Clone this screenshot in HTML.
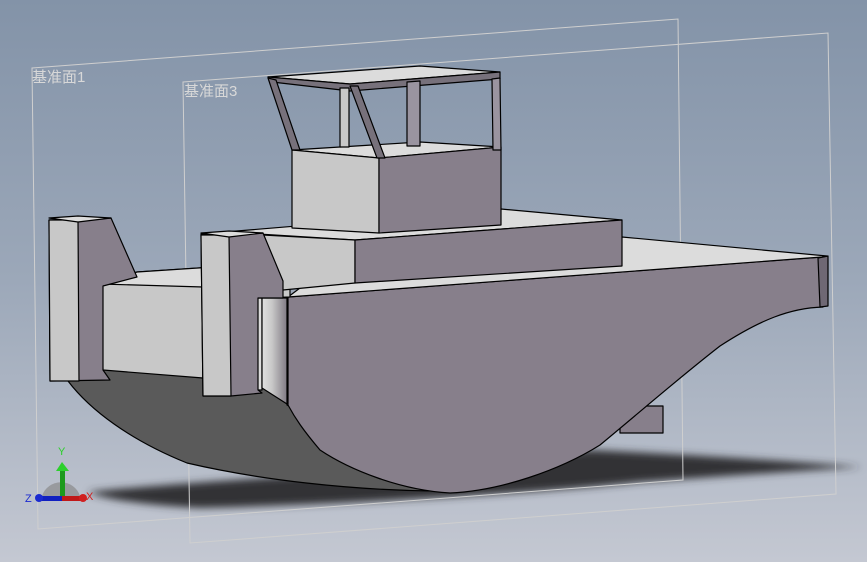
<!DOCTYPE html>
<html><head><meta charset="utf-8"><style>
html,body{margin:0;padding:0;width:867px;height:562px;overflow:hidden}
svg{display:block}
</style></head><body>
<svg width="867" height="562" viewBox="0 0 867 562" xmlns="http://www.w3.org/2000/svg">
<defs>
<linearGradient id="bg" x1="0" y1="0" x2="0" y2="1">
<stop offset="0" stop-color="#8393a8"/><stop offset="0.5" stop-color="#9ca8b9"/><stop offset="1" stop-color="#c4c8d2"/>
</linearGradient>
<linearGradient id="cyl" x1="0" y1="0" x2="1" y2="0">
<stop offset="0" stop-color="#e0e0e0"/><stop offset="0.4" stop-color="#c8c8c8"/><stop offset="1" stop-color="#807a84"/>
</linearGradient>
<filter id="blur" x="-10%" y="-50%" width="120%" height="200%"><feGaussianBlur stdDeviation="4"/></filter>
</defs>
<rect width="867" height="562" fill="url(#bg)"/>
<path d="M88,492 C200,480 400,472 590,450 C700,455 800,462 862,467 C780,472 700,478 640,482 C520,495 300,506 200,508 C140,505 100,498 88,492 Z" fill="#303236" filter="url(#blur)"/>
<g fill="none" stroke="#cfcfcf" stroke-width="1">
<path d="M32,68 L678,19 L683,480 L38,529 Z"/>
<path d="M183,82 L828,33 L836,494 L190,543 Z"/>
</g>
<g font-family="'Liberation Sans','Noto Sans CJK SC',sans-serif" font-size="15" fill="#d8d8d8">
<text x="32" y="82">基准面1</text>
<text x="184" y="96">基准面3</text>
</g>
<g stroke="#000" stroke-width="1.2" stroke-linejoin="round">
<path d="M620,406 L663,406 L663,433 L620,433 Z" fill="#877f8b"/>
<path d="M68,381 C90,410 130,440 187,463 C260,480 350,490 434,491 L287,405 L287,298 L100,287 L68,370 Z" fill="#5a5a5a"/>
<path d="M288,297 L822,257 L823,307 C790,308 760,320 720,346 C680,377 640,412 600,445 C560,470 500,491 450,493 C400,490 350,470 320,450 C303,430 295,418 288,405 Z" fill="#877f8b"/>
<path d="M818,258 L828,256 L828,306 L820,307 Z" fill="#6f6874"/>
<path d="M288,297 L300,288 L622,237 L827,256 L822,257 Z" fill="#dcdcdc"/>
<path d="M100,284 L137,272 L230,266 L290,262 L290,297 L203,300 L203,378 L103,370 Z" fill="#c8c8c8"/>
<path d="M100,284 L137,272 L290,262 L290,282 L203,287 Z" fill="#dcdcdc"/>
<path d="M49,220 L111,218 L137,277 L103,286 L103,370 L110,380 L50,381 Z" fill="#877f8b"/>
<path d="M49,220 L78,220 L79,381 L50,381 Z" fill="#c8c8c8"/>
<path d="M49,218 L78,216 L111,218 L78,222 Z" fill="#dcdcdc"/>
<path d="M225,232 L501,209 L622,220 L355,240 Z" fill="#dcdcdc"/>
<path d="M263,235 L355,240 L355,283 L283,290 Z" fill="#c8c8c8"/>
<path d="M355,240 L622,220 L622,266 L355,283 Z" fill="#877f8b"/>
<path d="M254,298 L262,298 L262,390 L254,390 Z" fill="#dcdcdc"/>
<path d="M262,298 L287,298 L287,404 L262,388 Z" fill="url(#cyl)"/>
<path d="M201,234 L263,233 L283,281 L283,298 L258,298 L258,390 L262,393 L231,396 L203,396 Z" fill="#877f8b"/>
<path d="M201,235 L229,235 L231,396 L203,396 Z" fill="#c8c8c8"/>
<path d="M201,233 L229,231 L263,233 L229,237 Z" fill="#dcdcdc"/>
<path d="M292,150 L420,142 L501,147 L379,158 Z" fill="#dcdcdc"/>
<path d="M292,150 L379,158 L379,233 L292,228 Z" fill="#c8c8c8"/>
<path d="M379,158 L501,147 L501,225 L379,233 Z" fill="#877f8b"/>
<path d="M268,77 L420,66 L500,72 L350,84 Z" fill="#dcdcdc"/>
<path d="M268,77 L350,84 L500,72 L500,79 L350,91 L272,82 Z" fill="#77717b"/>
<path d="M268,78 L276,80 L300,150 L292,150 Z" fill="#77717b"/>
<path d="M350,86 L358,86 L385,158 L377,158 Z" fill="#77717b"/>
<path d="M340,88 L349,88 L349,147 L340,147 Z" fill="#c8c8c8"/>
<path d="M407,82 L420,81 L420,146 L407,146 Z" fill="#9a94a0"/>
<path d="M492,79 L500,78 L501,150 L493,150 Z" fill="#9a94a0"/>
</g>
<g>
<path d="M42,496 A20,20 0 0 1 80,496 Z" fill="#8a8a8a" opacity="0.7"/>
<rect x="60" y="470" width="5" height="28" fill="#1c9a1c"/>
<path d="M56,471 L62,462 L69,471 Z" fill="#2cd02c"/>
<rect x="40" y="496" width="24" height="5" fill="#1020c0"/>
<circle cx="39" cy="498" r="4" fill="#1a2ad0"/>
<rect x="62" y="496" width="20" height="5" fill="#c01818"/>
<circle cx="83" cy="498" r="4" fill="#d02020"/>
<text x="58" y="455" font-family="'Liberation Sans',sans-serif" font-size="11" fill="#2cd02c">Y</text>
<text x="25" y="502" font-family="'Liberation Sans',sans-serif" font-size="11" fill="#1a2ad0">Z</text>
<text x="86" y="500" font-family="'Liberation Sans',sans-serif" font-size="11" fill="#d02020">X</text>
</g>
</svg>
</body></html>
